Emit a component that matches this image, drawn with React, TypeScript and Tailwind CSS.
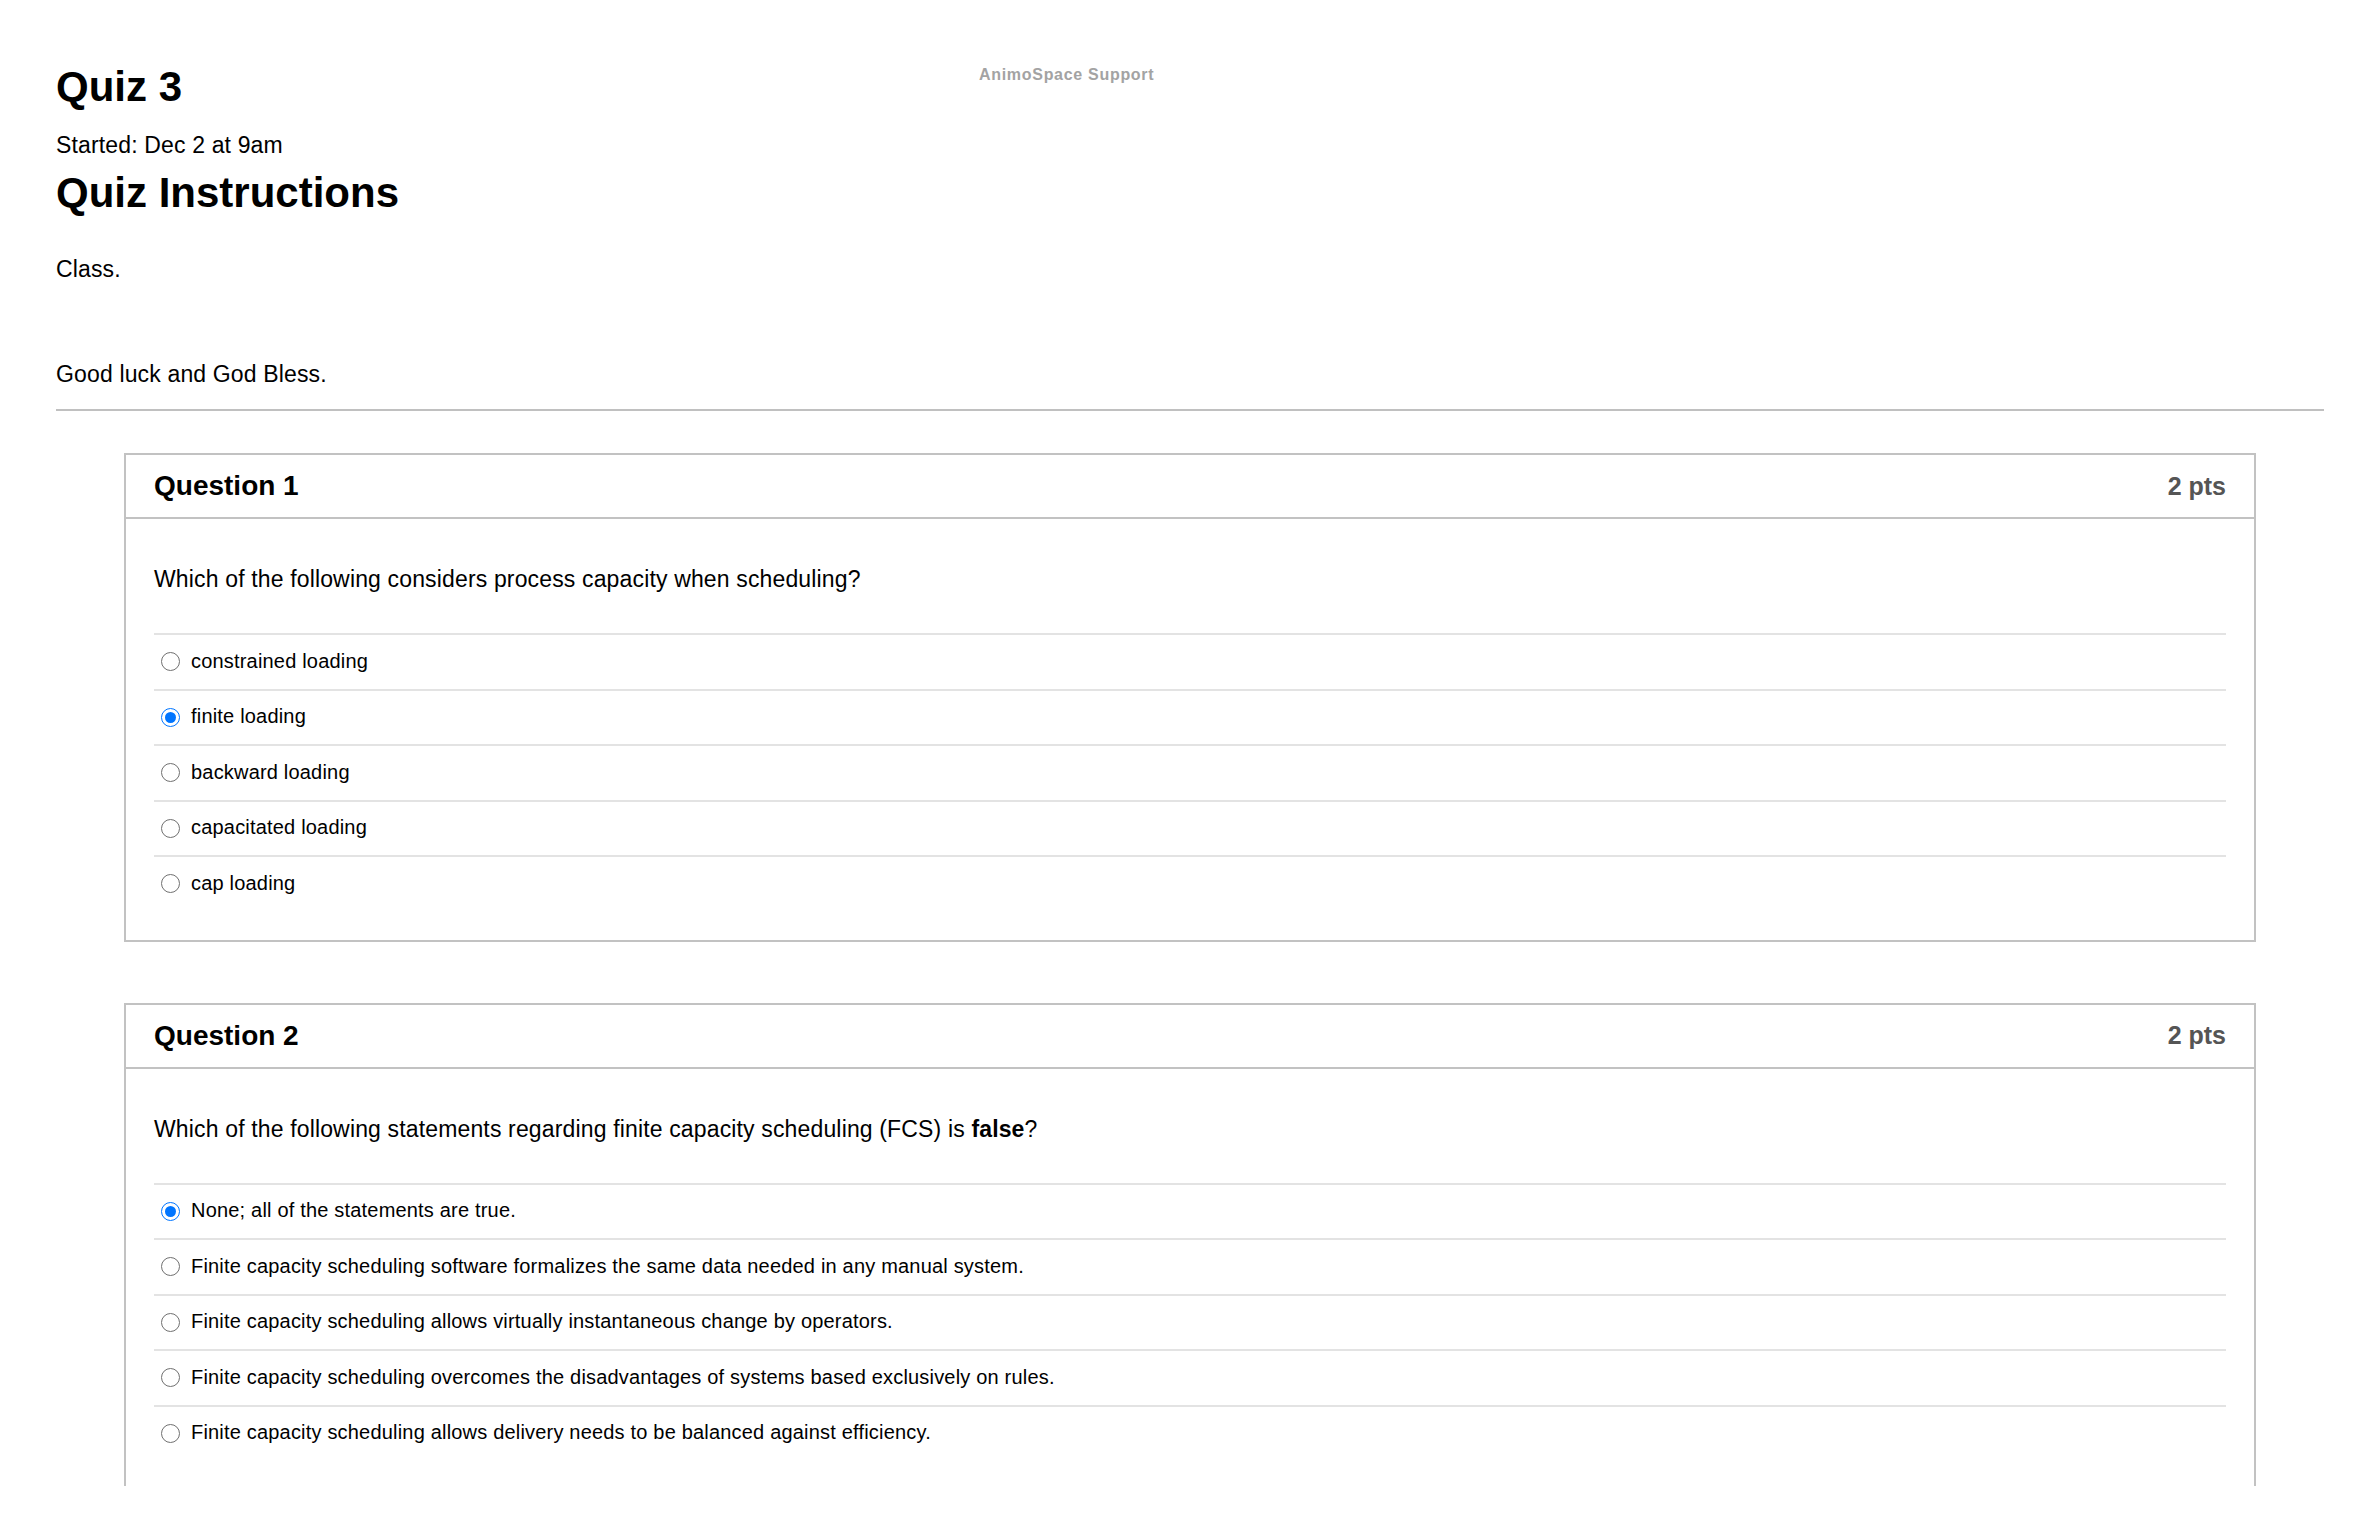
import React from "react";

type Opt = { label: string; checked?: boolean };

function Radio({ checked }: { checked?: boolean }) {
  if (checked) {
    return (
      <span className="ml-[7px] flex h-[19px] w-[19px] shrink-0 items-center justify-center rounded-full border-[1.5px] border-[#0075ff] bg-white">
        <span className="h-[11px] w-[11px] rounded-full bg-[#0075ff]" />
      </span>
    );
  }
  return <span className="ml-[7px] h-[19px] w-[19px] shrink-0 rounded-full border-[1.5px] border-[#707070] bg-white" />;
}

function Question({
  title,
  pts,
  text,
  options,
}: {
  title: string;
  pts: string;
  text: React.ReactNode;
  options: Opt[];
}) {
  return (
    <section className="mx-[68px] border-2 border-[#c2c2c2] bg-white">
      <header className="flex h-[64px] items-center justify-between border-b-2 border-[#c2c2c2] px-[28px]">
        <h2 className="text-[28px] font-bold leading-none text-black">{title}</h2>
        <span className="text-[25px] font-bold leading-none text-[#555555]">{pts}</span>
      </header>
      <div className="px-[28px] pt-[49px] pb-[29px]">
        <p className="text-[23px] leading-none tracking-[0.15px] text-black">{text}</p>
        <div className="mt-[42px]">
          {options.map((o) => (
            <div
              key={o.label}
              className="flex h-[55.5px] items-center gap-[11px] border-t-2 border-[#e3e3e3]"
            >
              <Radio checked={o.checked} />
              <span className="pb-[2px] text-[20px] leading-none tracking-[0.19px] text-black">{o.label}</span>
            </div>
          ))}
        </div>
      </div>
    </section>
  );
}

export default function App() {
  return (
    <div className="relative h-[1540px] w-full overflow-hidden bg-white font-['Liberation_Sans',Arial,sans-serif] text-black">
      <div className="h-[1486px] overflow-hidden">
        <div className="px-[56px] pt-[66px]">
          <h1 className="text-[42px] font-bold leading-none">Quiz 3</h1>
          <p className="mt-[26px] text-[23px] leading-none tracking-[0.15px]">Started: Dec 2 at 9am</p>
          <h1 className="mt-[15px] text-[42px] font-bold leading-none">Quiz Instructions</h1>
          <p className="mt-[44px] text-[23px] leading-none tracking-[0.15px]">Class.</p>
          <p className="mt-[82px] text-[23px] leading-none tracking-[0.15px]">Good luck and God Bless.</p>
          <div className="mt-[23px] h-[2px] bg-[#c0c0c0]" />

          <div className="mt-[42px] flex flex-col gap-[61px]">
            <Question
              title="Question 1"
              pts="2 pts"
              text="Which of the following considers process capacity when scheduling?"
              options={[
                { label: "constrained loading" },
                { label: "finite loading", checked: true },
                { label: "backward loading" },
                { label: "capacitated loading" },
                { label: "cap loading" },
              ]}
            />
            <Question
              title="Question 2"
              pts="2 pts"
              text={
                <>
                  Which of the following statements regarding finite capacity scheduling (FCS) is{" "}
                  <strong className="font-bold">false</strong>?
                </>
              }
              options={[
                { label: "None; all of the statements are true.", checked: true },
                { label: "Finite capacity scheduling software formalizes the same data needed in any manual system." },
                { label: "Finite capacity scheduling allows virtually instantaneous change by operators." },
                { label: "Finite capacity scheduling overcomes the disadvantages of systems based exclusively on rules." },
                { label: "Finite capacity scheduling allows delivery needs to be balanced against efficiency." },
              ]}
            />
          </div>
        </div>
      </div>
      <span className="absolute left-[979px] top-[67px] text-[16px] font-bold leading-none tracking-[0.7px] text-[#a3a3a3]">
        AnimoSpace Support
      </span>
    </div>
  );
}
